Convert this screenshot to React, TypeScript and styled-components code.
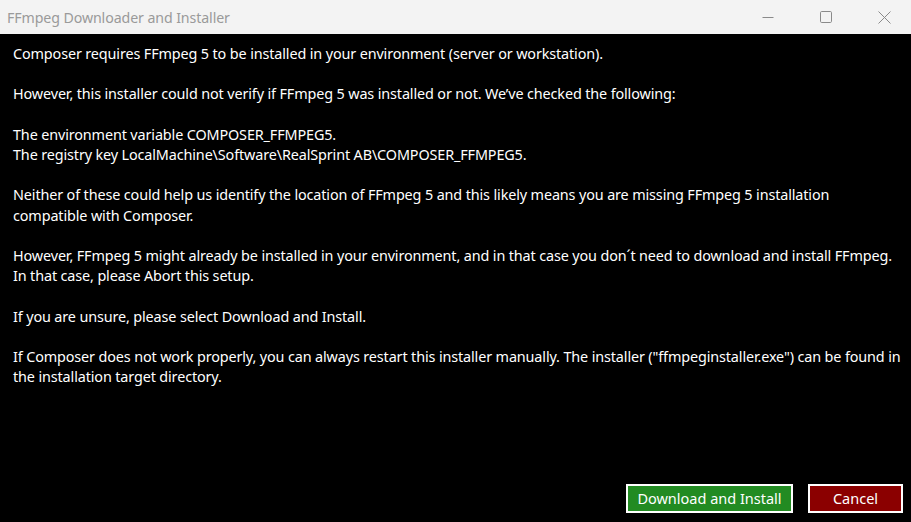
import React from "react";
import styled, { createGlobalStyle } from "styled-components";

const GlobalStyle = createGlobalStyle`
  html, body, #root {
    margin: 0;
    padding: 0;
    width: 100%;
    height: 100%;
    overflow: hidden;
  }
  body {
    background: #000;
    font-family: "Noto Sans", "Open Sans", sans-serif;
  }
`;

const Window = styled.div`
  width: 911px;
  height: 522px;
  display: flex;
  flex-direction: column;
  background: #000;
`;

const TitleBar = styled.div`
  height: 34px;
  flex: 0 0 34px;
  display: flex;
  align-items: center;
  margin-right: -3px;
  background: #f3f3f3;
`;

const Title = styled.div`
  flex: 1;
  padding-left: 7px;
  font-size: 14.2px;
  color: #9a9a9a;
  letter-spacing: -0.1px;
`;

const CaptionButton = styled.div`
  width: 58.5px;
  height: 34px;
  display: flex;
  align-items: center;
  justify-content: center;
  color: #8a8a8a;
`;

const Body = styled.div`
  flex: 1;
  display: flex;
  flex-direction: column;
  padding: 10px 8px 9px 13px;
`;

const Message = styled.div`
  flex: 1;
  color: #fff;
  font-size: 14.4px;
  line-height: 20.2px;
  letter-spacing: -0.13px;
  white-space: nowrap;
`;

const Paragraph = styled.p`
  margin: 0 0 20.2px;
`;

const Actions = styled.div`
  display: flex;
  justify-content: flex-end;
  gap: 15px;
`;

const ActionButton = styled.button<{ $tone: "go" | "stop"; $w: number }>`
  width: ${(p) => p.$w}px;
  height: 29px;
  box-sizing: border-box;
  border: 2px solid #fff;
  background: ${(p) => (p.$tone === "go" ? "#228b22" : "#8b0000")};
  color: #fff;
  font-family: "Noto Sans", "Open Sans", sans-serif;
  font-size: 14.5px;
  padding: 0 0 1px;
  cursor: pointer;
`;

const paragraphs: string[][] = [
  ["Composer requires FFmpeg 5 to be installed in your environment (server or workstation)."],
  ["However, this installer could not verify if FFmpeg 5 was installed or not. We\u2019ve checked the following:"],
  [
    "The environment variable COMPOSER_FFMPEG5.",
    "The registry key LocalMachine\\Software\\RealSprint AB\\COMPOSER_FFMPEG5.",
  ],
  [
    "Neither of these could help us identify the location of FFmpeg 5 and this likely means you are missing FFmpeg 5 installation",
    "compatible with Composer.",
  ],
  [
    "However, FFmpeg 5 might already be installed in your environment, and in that case you don\u00b4t need to download and install FFmpeg.",
    "In that case, please Abort this setup.",
  ],
  ["If you are unsure, please select Download and Install."],
  [
    "If Composer does not work properly, you can always restart this installer manually. The installer (\"ffmpeginstaller.exe\") can be found in",
    "the installation target directory.",
  ],
];

export default function App() {
  return (
    <Window>
      <GlobalStyle />
      <TitleBar>
        <Title>FFmpeg Downloader and Installer</Title>
        <CaptionButton>
          <svg width="12" height="12" viewBox="0 0 12 12">
            <path d="M0.5 6.5h11" stroke="currentColor" strokeWidth="1" />
          </svg>
        </CaptionButton>
        <CaptionButton>
          <svg width="12" height="12" viewBox="0 0 12 12">
            <rect x="0.5" y="0.5" width="11" height="11" rx="1.2" fill="none" stroke="currentColor" strokeWidth="1" />
          </svg>
        </CaptionButton>
        <CaptionButton>
          <svg width="13" height="13" viewBox="0 0 13 13">
            <path d="M0.5 0.5l12 12M12.5 0.5l-12 12" stroke="currentColor" strokeWidth="1" />
          </svg>
        </CaptionButton>
      </TitleBar>
      <Body>
        <Message>
          {paragraphs.map((lines, i) => (
            <Paragraph key={i}>
              {lines.map((l, j) => (
                <React.Fragment key={j}>
                  {j > 0 && <br />}
                  {l}
                </React.Fragment>
              ))}
            </Paragraph>
          ))}
        </Message>
        <Actions>
          <ActionButton $tone="go" $w={167}>Download and Install</ActionButton>
          <ActionButton $tone="stop" $w={95}>Cancel</ActionButton>
        </Actions>
      </Body>
    </Window>
  );
}
